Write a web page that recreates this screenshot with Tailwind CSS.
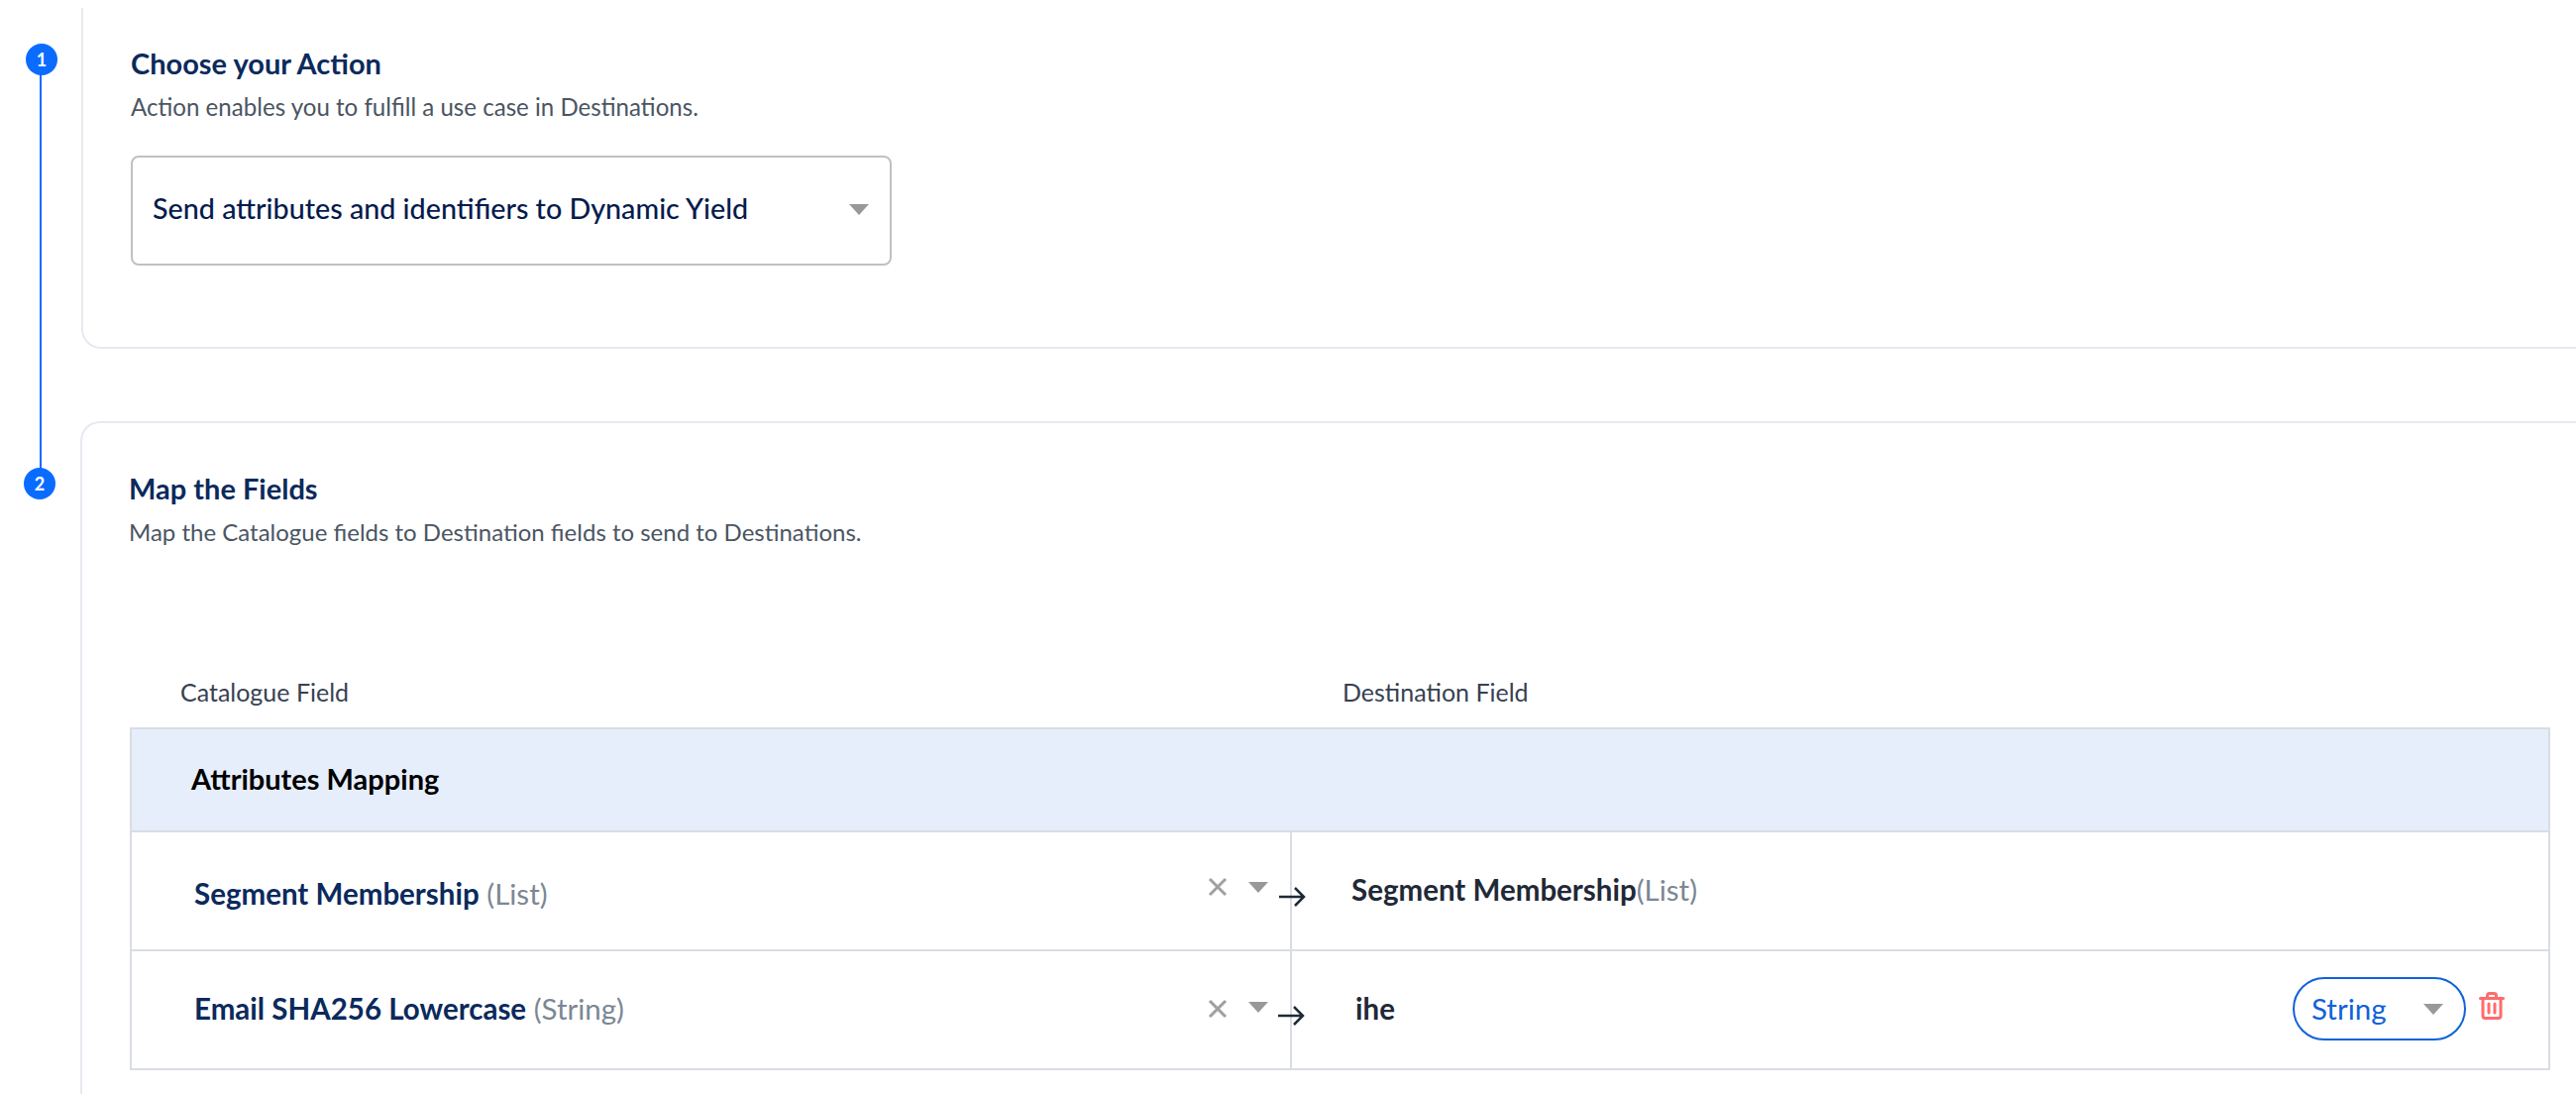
<!DOCTYPE html>
<html>
<head>
<meta charset="utf-8">
<script src="https://cdn.jsdelivr.net/npm/@tailwindcss/browser@4"></script>
</head>
<body class="bg-white overflow-hidden font-['Lato','Noto_Sans',sans-serif]">
<div class="relative h-[1104px] w-[2600px] overflow-hidden">
  <!-- timeline -->
  <div class="absolute left-[40px] top-[60px] h-[428px] w-[2px] bg-[#0a6cff]"></div>
  <div class="absolute left-[26px] top-[44px] flex size-[32px] items-center justify-center rounded-full bg-[#0a6cff] text-[18px] font-bold text-white">1</div>
  <div class="absolute left-[24px] top-[472px] flex size-[32px] items-center justify-center rounded-full bg-[#0a6cff] text-[18px] font-bold text-white">2</div>

  <div class="flex flex-col pt-[8px]">
    <!-- card 1 -->
    <section class="ml-[82px] h-[344px] rounded-bl-[20px] border-b-2 border-l-2 border-[#e6e9ef] pl-[48px] pt-[39px]">
      <h2 class="h-[34px] text-[29px] leading-[34px] font-bold text-[#0b2a5c]">Choose your Action</h2>
      <p class="mt-[11px] h-[32px] text-[24.1px] leading-[32px] text-[#4b5563]">Action enables you to fulfill a use case in Destinations.</p>
      <div class="mt-[33px] flex h-[111px] w-[768px] items-center justify-between rounded-[8px] border-2 border-[#bfc1c6] pb-[3px] pl-[20px] pr-[21px]">
        <span class="text-[28.7px] font-medium text-[#051b4d]">Send attributes and identifiers to Dynamic Yield</span>
        <svg width="20" height="11" viewBox="0 0 20 11"><path d="M0 0h20L10 11z" fill="#999"/></svg>
      </div>
    </section>

    <!-- card 2 -->
    <section class="ml-[81px] mt-[73px] h-[700px] rounded-tl-[20px] border-l-2 border-t-2 border-[#e6e9ef] pl-[47px] pt-[49px]">
      <h2 class="h-[34px] text-[29px] leading-[34px] font-bold text-[#0b2a5c]">Map the Fields</h2>
      <p class="mt-[11px] h-[32px] text-[24px] leading-[32px] text-[#4b5563]">Map the Catalogue fields to Destination fields to send to Destinations.</p>

      <div class="mt-[129px] ml-[1px] grid h-[52px] w-[2443px] grid-cols-[1171px_1fr] text-[25px] leading-[32px] text-[#374151]">
        <span class="pl-[51px]">Catalogue Field</span>
        <span class="pl-[53px]">Destination Field</span>
      </div>

      <div class="ml-[1px] w-[2443px] border-2 border-[#d9dde3]">
        <div class="flex h-[102px] items-center bg-[#e6eefb] pb-[3px] pl-[60px] text-[29px] font-bold text-black">Attributes Mapping</div>

        <div class="relative grid h-[120px] grid-cols-[1169px_1fr] border-t-2 border-[#d9dde3]">
          <div class="flex items-center justify-between pb-[4px] pl-[63px] pr-[22px] pt-[10px] text-[29.5px]">
            <span><b class="font-bold text-[#0b2a5c]">Segment Membership</b> <span class="text-[#7c8794]">(List)</span></span>
            <span class="-mt-[14px] flex items-center gap-[21px]">
              <svg width="20" height="20" viewBox="0 0 20 20"><path d="M2 2l16 16M18 2L2 18" stroke="#a0a0a0" stroke-width="3" fill="none"/></svg>
              <svg width="20" height="11" viewBox="0 0 20 11"><path d="M0 0h20L10 11z" fill="#999"/></svg>
            </span>
          </div>
          <div class="flex items-center border-l-2 border-[#d9dde3] pb-[2px] pl-[60px] text-[29.5px]">
            <b class="font-bold text-[#1f2937]">Segment Membership</b><span class="text-[#7c8794]">(List)</span>
          </div>
          <svg class="absolute left-[1157px] top-[53px]" width="28" height="24" viewBox="0 0 28 24"><path d="M1 12h25M17 3l9 9-9 9" stroke="#1f2937" stroke-width="2.5" fill="none"/></svg>
        </div>

        <div class="relative grid h-[120px] grid-cols-[1169px_1fr] border-t-2 border-[#d9dde3]">
          <div class="flex items-center justify-between pb-[2px] pl-[63px] pr-[22px] text-[29.5px]">
            <span><b class="font-bold text-[#0b2a5c]">Email SHA256 Lowercase</b> <span class="text-[#7c8794]">(String)</span></span>
            <span class="flex items-center gap-[21px]">
              <svg width="20" height="20" viewBox="0 0 20 20"><path d="M2 2l16 16M18 2L2 18" stroke="#a0a0a0" stroke-width="3" fill="none"/></svg>
              <svg width="20" height="11" viewBox="0 0 20 11" class="-mt-[4px]"><path d="M0 0h20L10 11z" fill="#999"/></svg>
            </span>
          </div>
          <div class="flex items-center justify-between border-l-2 border-[#d9dde3] pb-[2px] pl-[64px] pr-[44px] text-[29.5px]">
            <b class="font-bold text-[#1f2937]">ihe</b>
            <span class="flex items-center gap-[13px]">
              <span class="flex h-[64px] w-[175px] items-center justify-between rounded-full border-2 border-[#0f62d9] pl-[17px] pr-[21px] text-[#0f62d9]">String
                <svg width="20" height="11" viewBox="0 0 20 11"><path d="M0 0h20L10 11z" fill="#999"/></svg>
              </span>
              <svg class="-mt-[6px]" width="26" height="28" viewBox="0 0 26 28" fill="none" stroke="#ff6b6b" stroke-width="3" stroke-linecap="round" stroke-linejoin="round"><path d="M1.5 6.5h23M8.5 6V4a2.5 2.5 0 0 1 2.5-2.5h4A2.5 2.5 0 0 1 17.5 4v2M4 7v17a2.5 2.5 0 0 0 2.5 2.5h13A2.5 2.5 0 0 0 22 24V7M10 12v9M16 12v9"/></svg>
            </span>
          </div>
          <svg class="absolute left-[1156px] top-[53px]" width="28" height="24" viewBox="0 0 28 24"><path d="M1 12h25M17 3l9 9-9 9" stroke="#1f2937" stroke-width="2.5" fill="none"/></svg>
        </div>
      </div>
    </section>
  </div>
</div>
</body>
</html>
